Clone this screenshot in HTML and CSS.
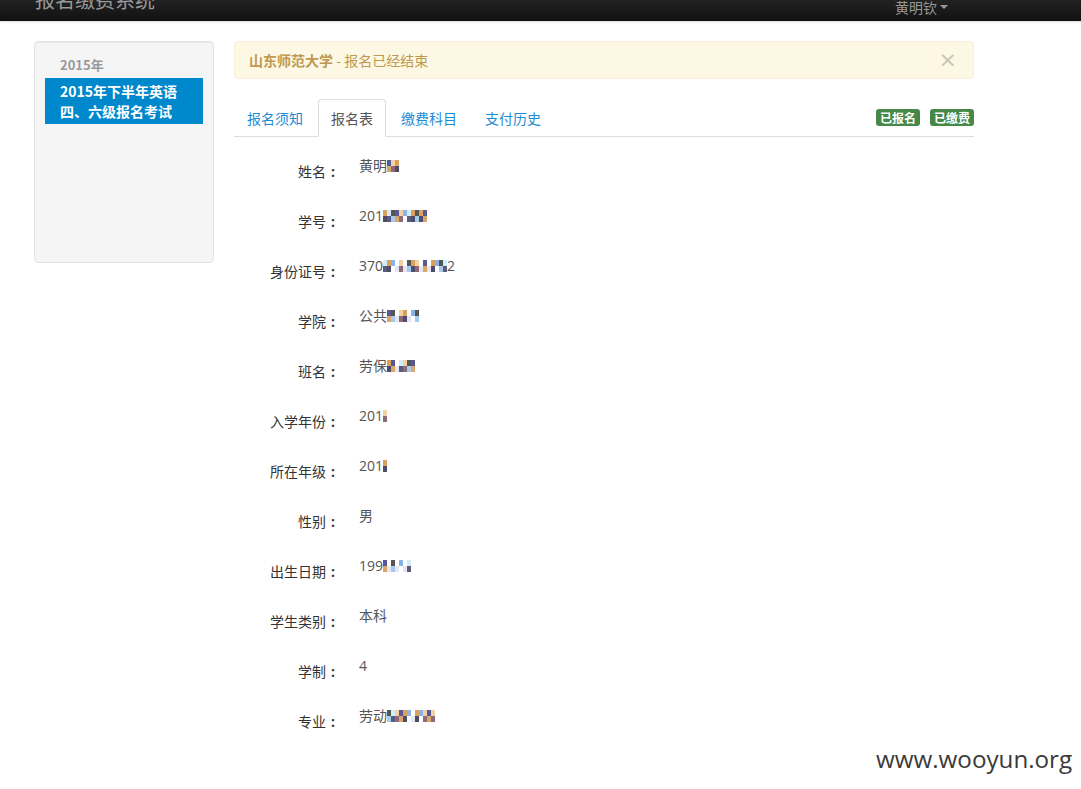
FILE: index.html
```html
<!DOCTYPE html>
<html lang="zh">
<head>
<meta charset="utf-8">
<title>报名缴费系统</title>
<link rel="stylesheet" href="styles.css">
</head>
<body>
<div class="navbar">
  <div class="brand">报名缴费系统</div>
  <div class="user">黄明钦<span class="caret"></span></div>
</div>
<div class="page">
  <div class="sidebar">
    <div class="nav-header">2015年</div>
    <div class="nav-item active">2015年下半年英语<br>四、六级报名考试</div>
  </div>
  <div class="main">
    <div class="alert"><b>山东师范大学</b> - 报名已经结束<span class="close">×</span></div>
    <div class="tabs">
      <a class="tab">报名须知</a>
      <a class="tab active">报名表</a>
      <a class="tab">缴费科目</a>
      <a class="tab">支付历史</a>
      <div class="badges">
        <span class="badge">已报名</span>
        <span class="badge">已缴费</span>
      </div>
    </div>
    <div class="form">
      <div class="row"><div class="label">姓名<span class="colon">:</span></div><div class="value">黄明<span class="mz"><i class="c1"></i><i class="c4"></i><i class="c6"></i></span></div></div>
      <div class="row"><div class="label">学号<span class="colon">:</span></div><div class="value">201<span class="mz"><i class="c6"></i><i class="c2"></i><i class="c3"></i><i class="c1"></i><i class="c4"></i><i class="c5"></i><i class="c2"></i><i class="c6"></i><i class="c3"></i><i class="c6"></i><i class="c1"></i></span></div></div>
      <div class="row"><div class="label">身份证号<span class="colon">:</span></div><div class="value">370<span class="mz"><i class="c2"></i><i class="c6"></i><i class="c5"></i><i class="c0"></i><i class="c4"></i><i class="c0"></i><i class="c3"></i><i class="c6"></i><i class="c4"></i><i class="c0"></i><i class="c1"></i><i class="c0"></i><i class="c6"></i><i class="c5"></i><i class="c3"></i><i class="c2"></i></span>2</div></div>
      <div class="row"><div class="label">学院<span class="colon">:</span></div><div class="value">公共<span class="mz"><i class="c1"></i><i class="c3"></i><i class="c0"></i><i class="c4"></i><i class="c6"></i><i class="c0"></i><i class="c5"></i><i class="c3"></i></span></div></div>
      <div class="row"><div class="label">班名<span class="colon">:</span></div><div class="value">劳保<span class="mz"><i class="c6"></i><i class="c1"></i><i class="c0"></i><i class="c2"></i><i class="c4"></i><i class="c3"></i><i class="c1"></i></span></div></div>
      <div class="row"><div class="label">入学年份<span class="colon">:</span></div><div class="value">201<span class="mz"><i class="c4"></i></span></div></div>
      <div class="row"><div class="label">所在年级<span class="colon">:</span></div><div class="value">201<span class="mz"><i class="c6"></i></span></div></div>
      <div class="row"><div class="label">性别<span class="colon">:</span></div><div class="value">男</div></div>
      <div class="row"><div class="label">出生日期<span class="colon">:</span></div><div class="value">199<span class="mz"><i class="c1"></i><i class="c0"></i><i class="c3"></i><i class="c0"></i><i class="c5"></i><i class="c0"></i><i class="c2"></i></span></div></div>
      <div class="row"><div class="label">学生类别<span class="colon">:</span></div><div class="value">本科</div></div>
      <div class="row"><div class="label">学制<span class="colon">:</span></div><div class="value">4</div></div>
      <div class="row"><div class="label">专业<span class="colon">:</span></div><div class="value">劳动<span class="mz"><i class="c3"></i><i class="c2"></i><i class="c4"></i><i class="c1"></i><i class="c6"></i><i class="c5"></i><i class="c0"></i><i class="c6"></i><i class="c5"></i><i class="c4"></i><i class="c1"></i><i class="c4"></i></span></div></div>
    </div>
  </div>
</div>
<div class="watermark">www.wooyun.org</div>
</body>
</html>
```

FILE: styles.css
```css
html, body {
  margin: 0;
  padding: 0;
  background: #fff;
}
body {
  font-family: "Open Sans", "Noto Sans CJK SC", sans-serif;
  font-size: 14px;
  line-height: 20px;
  color: #333;
  position: relative;
  min-height: 789px;
}
.navbar {
  height: 21px;
  background: linear-gradient(#222, #111);
  box-shadow: 0 1px 2px rgba(0,0,0,0.15);
  display: flex;
  justify-content: space-between;
  overflow: hidden;
  color: #999;
}
.brand {
  font-family: "Noto Sans CJK SC", sans-serif;
  font-size: 20px;
  line-height: 20px;
  margin: -10px 0 0 35px;
}
.user {
  font-family: "Noto Sans CJK SC", sans-serif;
  font-size: 14px;
  line-height: 14px;
  margin: -8px 133px 0 0;
  display: flex;
  align-items: center;
}
.caret {
  display: inline-block;
  margin-left: 3px;
  border-top: 4px solid #999;
  border-left: 4px solid transparent;
  border-right: 4px solid transparent;
}
.page {
  display: flex;
  gap: 20px;
  padding: 20px 0 0 34px;
}
.sidebar {
  width: 158px;
  height: 207px;
  padding: 13px 10px 0 10px;
  background: #f5f5f5;
  border: 1px solid #e3e3e3;
  border-radius: 4px;
  box-shadow: inset 0 1px 1px rgba(0,0,0,0.05);
  font-family: "Noto Sans CJK SC", sans-serif;
}
.nav-header {
  font-size: 13px;
  font-weight: bold;
  color: #999;
  padding: 0 15px;
  line-height: 20px;
  margin-bottom: 3px;
}
.nav-item {
  padding: 3px 15px;
  font-weight: bold;
  color: #fff;
  background: #0088cc;
  line-height: 20px;
}
.main {
  width: 740px;
}
.alert {
  position: relative;
  height: 36px;
  line-height: 36px;
  padding: 0 14px;
  background: #fcf8e3;
  border: 1px solid #fbeed5;
  border-radius: 4px;
  color: #c09853;
  font-family: "Noto Sans CJK SC", sans-serif;
}
.alert b {
  font-weight: bold;
}
.close {
  position: absolute;
  right: 16px;
  top: 0;
  font-size: 22px;
  color: #c9c4b4;
  font-family: "DejaVu Sans", sans-serif;
}
.tabs {
  margin-top: 20px;
  display: flex;
  align-items: flex-end;
  border-bottom: 1px solid #ddd;
  font-family: "Noto Sans CJK SC", sans-serif;
}
.tab {
  display: block;
  padding: 8px 12px;
  margin-right: 2px;
  margin-bottom: -1px;
  border: 1px solid transparent;
  border-radius: 4px 4px 0 0;
  color: #1e8bd3;
  line-height: 20px;
}
.tab.active {
  color: #555;
  background: #fff;
  border-color: #ddd #ddd transparent;
}
.badges {
  margin-left: auto;
  align-self: center;
  display: flex;
  gap: 10px;
}
.badge {
  display: inline-block;
  background: #468847;
  color: #fff;
  font-weight: bold;
  font-size: 12px;
  line-height: 17px;
  padding: 0 4px;
  border-radius: 3px;
}
.form {
  padding-top: 19px;
}
.row {
  display: flex;
  height: 50px;
}
.label {
  width: 106px;
  text-align: right;
  padding-top: 5px;
  color: #333;
  font-family: "Noto Sans CJK SC", sans-serif;
}
.colon {
  display: inline-block;
  width: 14px;
  text-align: center;
  font-family: "Open Sans", sans-serif;
  font-weight: bold;
}
.value {
  margin-left: 19px;
  color: #555;
  display: flex;
  align-items: flex-start;
  font-family: "Open Sans", "Noto Sans CJK SC", sans-serif;
}
.mz {
  display: inline-flex;
  margin-top: 4px;
  height: 12px;
}
.mz i {
  display: block;
  width: 4px;
  height: 12px;
}
.mz .c0 { background: linear-gradient(#fff 50%, #e6e6f0 50%); }
.mz .c1 { background: linear-gradient(#5b5794 50%, #d8a56a 50%); }
.mz .c2 { background: linear-gradient(#cfeef7 50%, #5c5c7a 50%); }
.mz .c3 { background: linear-gradient(#555 50%, #a6c9ee 50%); }
.mz .c4 { background: linear-gradient(#f2d2a4 50%, #8c6a7a 50%); }
.mz .c5 { background: linear-gradient(#8ab3e6 50%, #fff 50%); }
.mz .c6 { background: linear-gradient(#d9a05e 50%, #4d4d6b 50%); }
.watermark {
  position: absolute;
  left: 876px;
  top: 743px;
  font-family: "Open Sans", "DejaVu Sans", sans-serif;
  font-size: 24.2px;
  line-height: 32px;
  color: #3a3a3a;
}
```
